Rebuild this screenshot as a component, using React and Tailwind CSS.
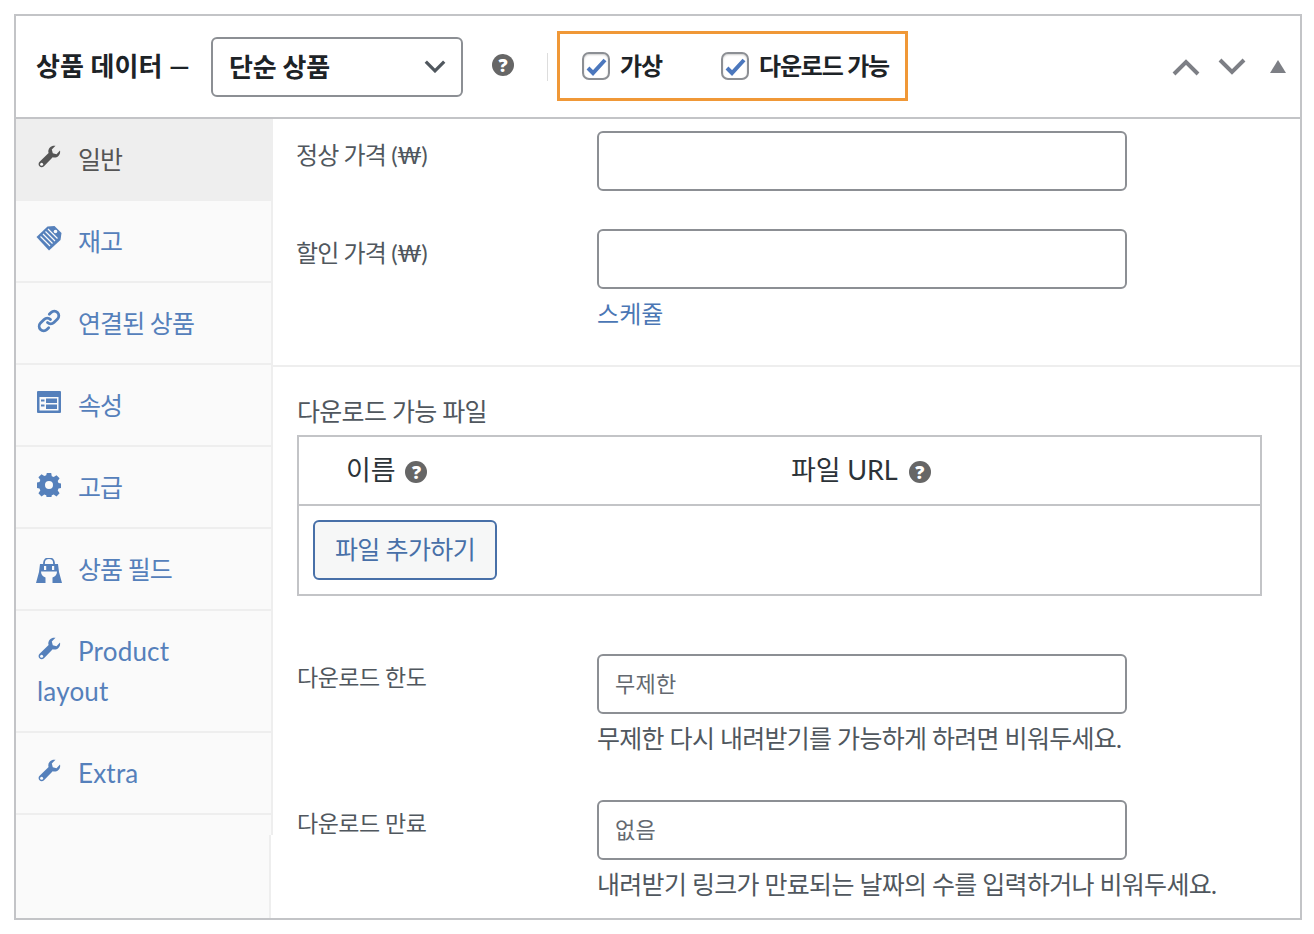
import React from "react";

const Wrench = ({ className }) => (
  <svg viewBox="0 0 24 24" className={className} fill="currentColor">
    <path d="M23 5.500c.5 2-.1 4-1.600 5.500-1.500 1.500-3.700 2-5.700 1.300L7 21.200c-1.300 1.300-3.300 1.300-4.500.1-1.300-1.300-1.200-3.300.1-4.500l9-8.700c-.7-2-.2-4.200 1.300-5.700C14.400.9 16.600.3 18.500.8l-3.700 3.700 1 3.700 3.700 1z" />
    <circle cx="4.600" cy="19.200" r="1.500" fill="#fafafa" />
  </svg>
);

const Tag = ({ className }) => (
  <svg viewBox="0 0 26 26" className={className} fill="currentColor">
    <path d="M0.500 12 L11.500 1.500 L18.500 1 L25.500 8 L24.500 15 L13 25.500 Z" />
    <g stroke="#fafafa" strokeWidth="1.200">
      <path d="M4.500 11.500 L14 21 M7 9 L16.500 18.500 M9.500 6.500 L19 16 M12 4 L21.500 13.500" />
    </g>
    <circle cx="19.500" cy="6.500" r="1.800" fill="#fafafa" />
  </svg>
);

const LinkIcon = ({ className }) => (
  <svg viewBox="0 0 24 24" className={className} fill="none" stroke="currentColor" strokeWidth="2.800" strokeLinecap="round">
    <path d="M10.500 13.500a4.500 4.500 0 0 0 6.400 0l3.600-3.600a4.500 4.500 0 0 0-6.400-6.400l-1.800 1.800" />
    <path d="M13.500 10.500a4.500 4.500 0 0 0-6.400 0l-3.600 3.600a4.500 4.500 0 0 0 6.400 6.400l1.800-1.800" />
  </svg>
);

const TableIcon = ({ className }) => (
  <svg viewBox="0 0 24 22" className={className} fill="currentColor">
    <path fillRule="evenodd" d="M1 0h22a1 1 0 0 1 1 1v20a1 1 0 0 1-1 1H1a1 1 0 0 1-1-1V1a1 1 0 0 1 1-1zM2.500 6v13.500h19V6z" />
    <path d="M4 8.500h3.500v2H4zM9 7.500h11v4.500H9zM4 13.500h3.500v2H4zM9 13.500h11v4.500H9z" />
  </svg>
);

const Gear = ({ className }) => (
  <svg viewBox="0 0 24 24" className={className} fill="currentColor">
    <path fillRule="evenodd" d="M9.800 0h4.400l.6 3.300 1.900.8 2.800-1.900 3.100 3.100-1.900 2.800.8 1.900 3 .6v4.400l-3 .6-.8 1.900 1.900 2.800-3.100 3.100-2.800-1.900-1.900.8-.6 3.200H9.800l-.6-3.200-1.900-.8-2.800 1.900-3.100-3.100 1.900-2.800-.8-1.900-3-.6V9.600l3-.6.800-1.900-1.900-2.800 3.100-3.100 2.800 1.900 1.900-.8zM12 8a4 4 0 1 0 0 8 4 4 0 0 0 0-8z" />
  </svg>
);

const Bag = ({ className }) => (
  <svg viewBox="0 0 26 25" className={className} fill="currentColor">
    <path d="M8 6.500V5a5 5 0 0 1 10 0v1.500" fill="none" stroke="currentColor" strokeWidth="1.800" />
    <path d="M4 6h18l1 8 3 11H0l3-11z" />
    <path d="M5 13.500h16c0 3-1.500 5-4.500 6V25h-7v-5.500C6.500 18.500 5 16.500 5 13.500z" fill="#fafafa" />
    <rect x="8" y="8" width="2.200" height="4" fill="#fafafa" />
    <rect x="16" y="8" width="2.200" height="4" fill="#fafafa" />
  </svg>
);

const Help = ({ className = "" }) => (
  <span className={`inline-flex items-center justify-center w-[22px] h-[22px] rounded-full bg-[#666666] text-white text-[18px] font-black leading-none font-['Open_Sans',sans-serif] ${className}`}>
    ?
  </span>
);

const Check = () => (
  <span className="flex items-center justify-center w-[28px] h-[28px] shrink-0 rounded-[7px] border-2 border-[#8c8f94] bg-white shadow-[inset_0_1px_2px_rgba(0,0,0,0.2)]">
    <svg viewBox="0 0 24 24" className="w-[24px] h-[24px]" fill="none" stroke="#4b77bd" strokeWidth="4">
      <path d="M4 14 L9 19 L21 6" />
    </svg>
  </span>
);

const tabs = [
  { icon: Wrench, label: "일반", active: true },
  { icon: Tag, label: "재고", size: "w-[26px] h-[26px] -ml-px -mt-[2px]" },
  { icon: LinkIcon, label: "연결된 상품" },
  { icon: TableIcon, label: "속성", size: "w-[24px] h-[22px]" },
  { icon: Gear, label: "고급" },
  { icon: Bag, label: "상품 필드", size: "w-[26px] h-[25px] -ml-px mt-[3px]" },
  { icon: Wrench, label: "Product layout", wrap: true },
  { icon: Wrench, label: "Extra", latin: true },
];

const Input = ({ placeholder }) => (
  <div className="w-[530px] h-[60px] rounded-[6px] border-2 border-[#8c8f94] bg-white flex items-center px-[16px] pb-[1px] text-[22px] tracking-[0.3px] text-[#646970]">
    {placeholder}
  </div>
);

function Tab({ t }) {
  const Icon = t.icon;
  return (
    <li
      className={`border-b-2 border-[#eeeeee] pl-[21px] pr-[8px] ${t.wrap ? "h-[122px]" : "h-[82px]"} ${
        t.active ? "bg-[#eeeeee] text-[#555555] -mr-[2px]" : "text-[#5580bb]"
      } leading-[40px] ${t.wrap || t.latin ? "pt-[20px] text-[26px] tracking-[0.2px]" : "pt-[20px] text-[25px] tracking-[-0.9px]"}`}
    >
      {t.wrap ? (
        <>
          <div className="flex items-start">
            <Icon className="w-[24px] h-[24px] shrink-0 mt-[6px] mr-[17px]" />
            <span>Product</span>
          </div>
          <div>layout</div>
        </>
      ) : (
        <div className="flex items-start">
          <span className="w-[41px] shrink-0 pt-[6px] block">
            <Icon className={t.size || "w-[24px] h-[24px]"} />
          </span>
          <span>{t.label}</span>
        </div>
      )}
    </li>
  );
}

export default function App() {
  return (
    <div className="bg-white w-[1314px] h-[934px] pt-[14px] pl-[14px] font-['Lato','Noto_Sans_CJK_KR',sans-serif]">
      <div className="w-[1288px] h-[906px] border-2 border-[#c3c4c7] flex flex-col overflow-hidden">
        {/* Header */}
        <header className="h-[103px] shrink-0 border-b-2 border-[#c3c4c7] flex items-center pl-[20px] text-[#1d2327]">
          <h2 className="text-[26px] font-bold tracking-[0.1px] w-[155px] shrink-0 whitespace-nowrap">상품 데이터 —</h2>
          <div className="ml-[20px] w-[252px] h-[60px] rounded-[6px] border-2 border-[#8c8f94] flex items-center justify-between pl-[16px] pr-[15px] text-[26px] font-bold tracking-[-0.2px]">
            <span className="pt-[1px]">단순 상품</span>
            <svg viewBox="0 0 20 12" className="w-[22px] h-[13px]" fill="none" stroke="#50575e" strokeWidth="3">
              <path d="M1.500 1.500 L10 10 L18.500 1.500" />
            </svg>
          </div>
          <Help className="ml-[29px] -mt-[4px]" />
          <span className="ml-[33px] w-px h-[28px] bg-[#dddddd]" />
          <div className="ml-[9px] w-[351px] h-[70px] border-[3px] border-[#f09837] flex items-center pl-[22px] text-[24px] font-bold tracking-[-1.200px] -mt-[1px]">
            <Check />
            <span className="ml-[10px] w-[101px]">가상</span>
            <Check />
            <span className="ml-[10px] whitespace-nowrap">다운로드 가능</span>
          </div>
          <div className="ml-auto flex items-center pr-[14px] text-[#7d7f85]">
            <svg viewBox="0 0 28 18" className="w-[28px] h-[18px]" fill="none" stroke="currentColor" strokeWidth="4">
              <path d="M2 16 L14 4 L26 16" />
            </svg>
            <svg viewBox="0 0 28 18" className="w-[28px] h-[18px] ml-[18px]" fill="none" stroke="currentColor" strokeWidth="4">
              <path d="M2 2 L14 14 L26 2" />
            </svg>
            <svg viewBox="0 0 16 13" className="w-[16px] h-[13px] ml-[24px]" fill="currentColor">
              <path d="M8 0 L16 13 H0 Z" />
            </svg>
          </div>
        </header>

        <div className="flex flex-1 min-h-0">
          {/* Sidebar */}
          <aside className="w-[257px] shrink-0 flex flex-col">
            <ul className="w-[257px] h-[716px] shrink-0 bg-[#fafafa] border-r-2 border-[#eeeeee]">
              {tabs.map((t) => (
                <Tab key={t.label} t={t} />
              ))}
            </ul>
            <div className="w-[255px] flex-1 bg-[#fafafa] border-r-2 border-[#eeeeee]" />
          </aside>

          {/* Main */}
          <main className="flex-1 min-w-0 text-[#50575e] text-[24px]">
            <section className="h-[248px] border-b-2 border-[#eeeeee] pt-[12px] pl-[23px]">
              <div className="flex h-[98px]">
                <label className="w-[301px] leading-[48px] tracking-[-0.9px]">정상 가격 (₩)</label>
                <Input />
              </div>
              <div className="flex">
                <label className="w-[301px] leading-[48px] tracking-[-0.9px]">할인 가격 (₩)</label>
                <Input />
              </div>
              <a className="block ml-[301px] mt-[7px] text-[#4b77b5] leading-[36px] tracking-[0.1px]">스케쥴</a>
            </section>

            <section className="pl-[24px] pt-[26px]">
              <div className="leading-[36px] text-[25px] tracking-[-0.7px]">다운로드 가능 파일</div>
              <div className="w-[965px] h-[161px] mt-[6px] border-2 border-[#c3c4c7]">
                <div className="h-[69px] border-b-2 border-[#c3c4c7] flex items-center text-[27px] text-[#2c3338] tracking-[-0.1px]">
                  <div className="w-[445px] pl-[47px] flex items-center">
                    이름
                    <Help className="ml-[10px] mt-[2px]" />
                  </div>
                  <div className="pl-[47px] flex items-center">
                    파일 URL
                    <Help className="ml-[11px] mt-[2px]" />
                  </div>
                </div>
                <div className="pl-[14px] pt-[14px]">
                  <button className="w-[184px] h-[60px] rounded-[6px] border-2 border-[#4870a8] bg-[#f6f7f7] text-[#4870a8] text-[25px] tracking-[-0.6px]">
                    파일 추가하기
                  </button>
                </div>
              </div>
            </section>

            <section className="pl-[24px] pt-[58px]">
              <div className="flex h-[60px]">
                <label className="w-[300px] leading-[46px] text-[23px] tracking-[-0.5px]">다운로드 한도</label>
                <Input placeholder="무제한" />
              </div>
              <p className="ml-[300px] leading-[48px] text-[25px] tracking-[-0.7px] whitespace-nowrap">무제한 다시 내려받기를 가능하게 하려면 비워두세요.</p>
              <div className="flex h-[60px] mt-[38px]">
                <label className="w-[300px] leading-[46px] text-[23px] tracking-[-0.5px]">다운로드 만료</label>
                <Input placeholder="없음" />
              </div>
              <p className="ml-[300px] leading-[48px] text-[25px] tracking-[-0.7px] whitespace-nowrap">내려받기 링크가 만료되는 날짜의 수를 입력하거나 비워두세요.</p>
            </section>
          </main>
        </div>
      </div>
    </div>
  );
}
